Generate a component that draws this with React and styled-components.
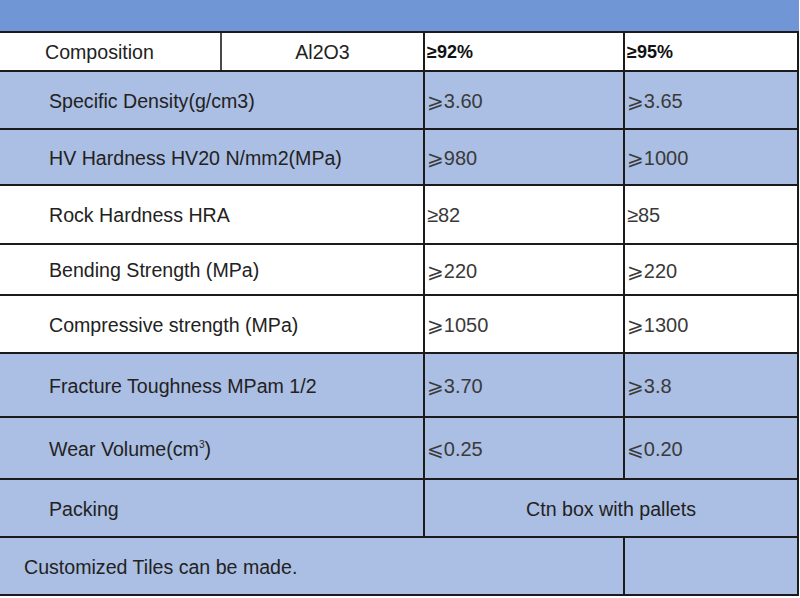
import React from 'react';
import styled, { createGlobalStyle } from 'styled-components';

const GlobalStyles = createGlobalStyle`
  * {
    margin: 0;
    padding: 0;
    box-sizing: border-box;
  }
  body {
    background: #ffffff;
    font-family: 'Liberation Sans', Arial, sans-serif;
  }
`;

const BLUE = '#abbee3';
const LINE = '#1b1b1b';

const Sheet = styled.div`
  width: 799px;
  display: flex;
  flex-direction: column;
`;

const TitleBar = styled.div`
  height: 33px;
  background: #7096d5;
  border-bottom: 2px solid ${LINE};
`;

const Row = styled.div`
  display: flex;
  height: ${props => props.h}px;
  background: ${props => (props.blue ? BLUE : '#ffffff')};
  border-bottom: 2px solid ${LINE};
  border-right: 2px solid ${LINE};
`;

const Cell = styled.div`
  display: flex;
  align-items: center;
  width: ${props => props.w}px;
  flex: ${props => (props.grow ? 1 : 'none')};
  justify-content: ${props => (props.center ? 'center' : 'flex-start')};
  padding-left: ${props => props.pad || 0}px;
  padding-top: 2px;
  border-right: ${props => (props.last ? 'none' : `2px solid ${props.soft ? '#4a4a4a' : LINE}`)};
`;

const Label = styled.span`
  font-family: 'Liberation Sans', Arial, sans-serif;
  font-size: 19.6px;
  color: #222;
  white-space: nowrap;
`;

const Value = styled.span`
  font-family: 'Liberation Sans', 'DejaVu Sans', sans-serif;
  font-size: 20px;
  color: #3a3a3a;
`;

const Head = styled.span`
  font-family: 'Liberation Sans', sans-serif;
  font-weight: bold;
  font-size: 18px;
  color: #111;
`;

const Sup = styled.sup`
  font-size: 10px;
  vertical-align: 8px;
`;

const rows = [
  { label: 'Specific Density(g/cm3)', a: '⩾3.60', b: '⩾3.65', h: 58, blue: true },
  { label: 'HV Hardness HV20 N/mm2(MPa)', a: '⩾980', b: '⩾1000', h: 56, blue: true },
  { label: 'Rock Hardness HRA', a: '≥82', b: '≥85', h: 59 },
  { label: 'Bending Strength (MPa)', a: '⩾220', b: '⩾220', h: 51 },
  { label: 'Compressive strength (MPa)', a: '⩾1050', b: '⩾1300', h: 58 },
  { label: 'Fracture Toughness MPam 1/2', a: '⩾3.70', b: '⩾3.8', h: 64, blue: true },
  { label: <>Wear Volume(cm<Sup>3</Sup>)</>, a: '⩽0.25', b: '⩽0.20', h: 62, blue: true },
];

export default function App() {
  return (
    <Sheet>
      <GlobalStyles />
      <TitleBar />
      <Row h={39}>
        <Cell w={222} pad={45} soft>
          <Label>Composition</Label>
        </Cell>
        <Cell w={203} center>
          <Label>Al2O3</Label>
        </Cell>
        <Cell w={200} pad={2}>
          <Head>≥92%</Head>
        </Cell>
        <Cell grow pad={2} last>
          <Head>≥95%</Head>
        </Cell>
      </Row>
      {rows.map((r, i) => (
        <Row key={i} h={r.h} blue={r.blue}>
          <Cell w={425} pad={49}>
            <Label>{r.label}</Label>
          </Cell>
          <Cell w={200} pad={2}>
            <Value>{r.a}</Value>
          </Cell>
          <Cell grow pad={2} last>
            <Value>{r.b}</Value>
          </Cell>
        </Row>
      ))}
      <Row h={58} blue>
        <Cell w={425} pad={49}>
          <Label>Packing</Label>
        </Cell>
        <Cell grow center last>
          <Label>Ctn box with pallets</Label>
        </Cell>
      </Row>
      <Row h={58} blue>
        <Cell w={625} pad={24}>
          <Label>Customized Tiles can be made.</Label>
        </Cell>
        <Cell grow last />
      </Row>
    </Sheet>
  );
}
